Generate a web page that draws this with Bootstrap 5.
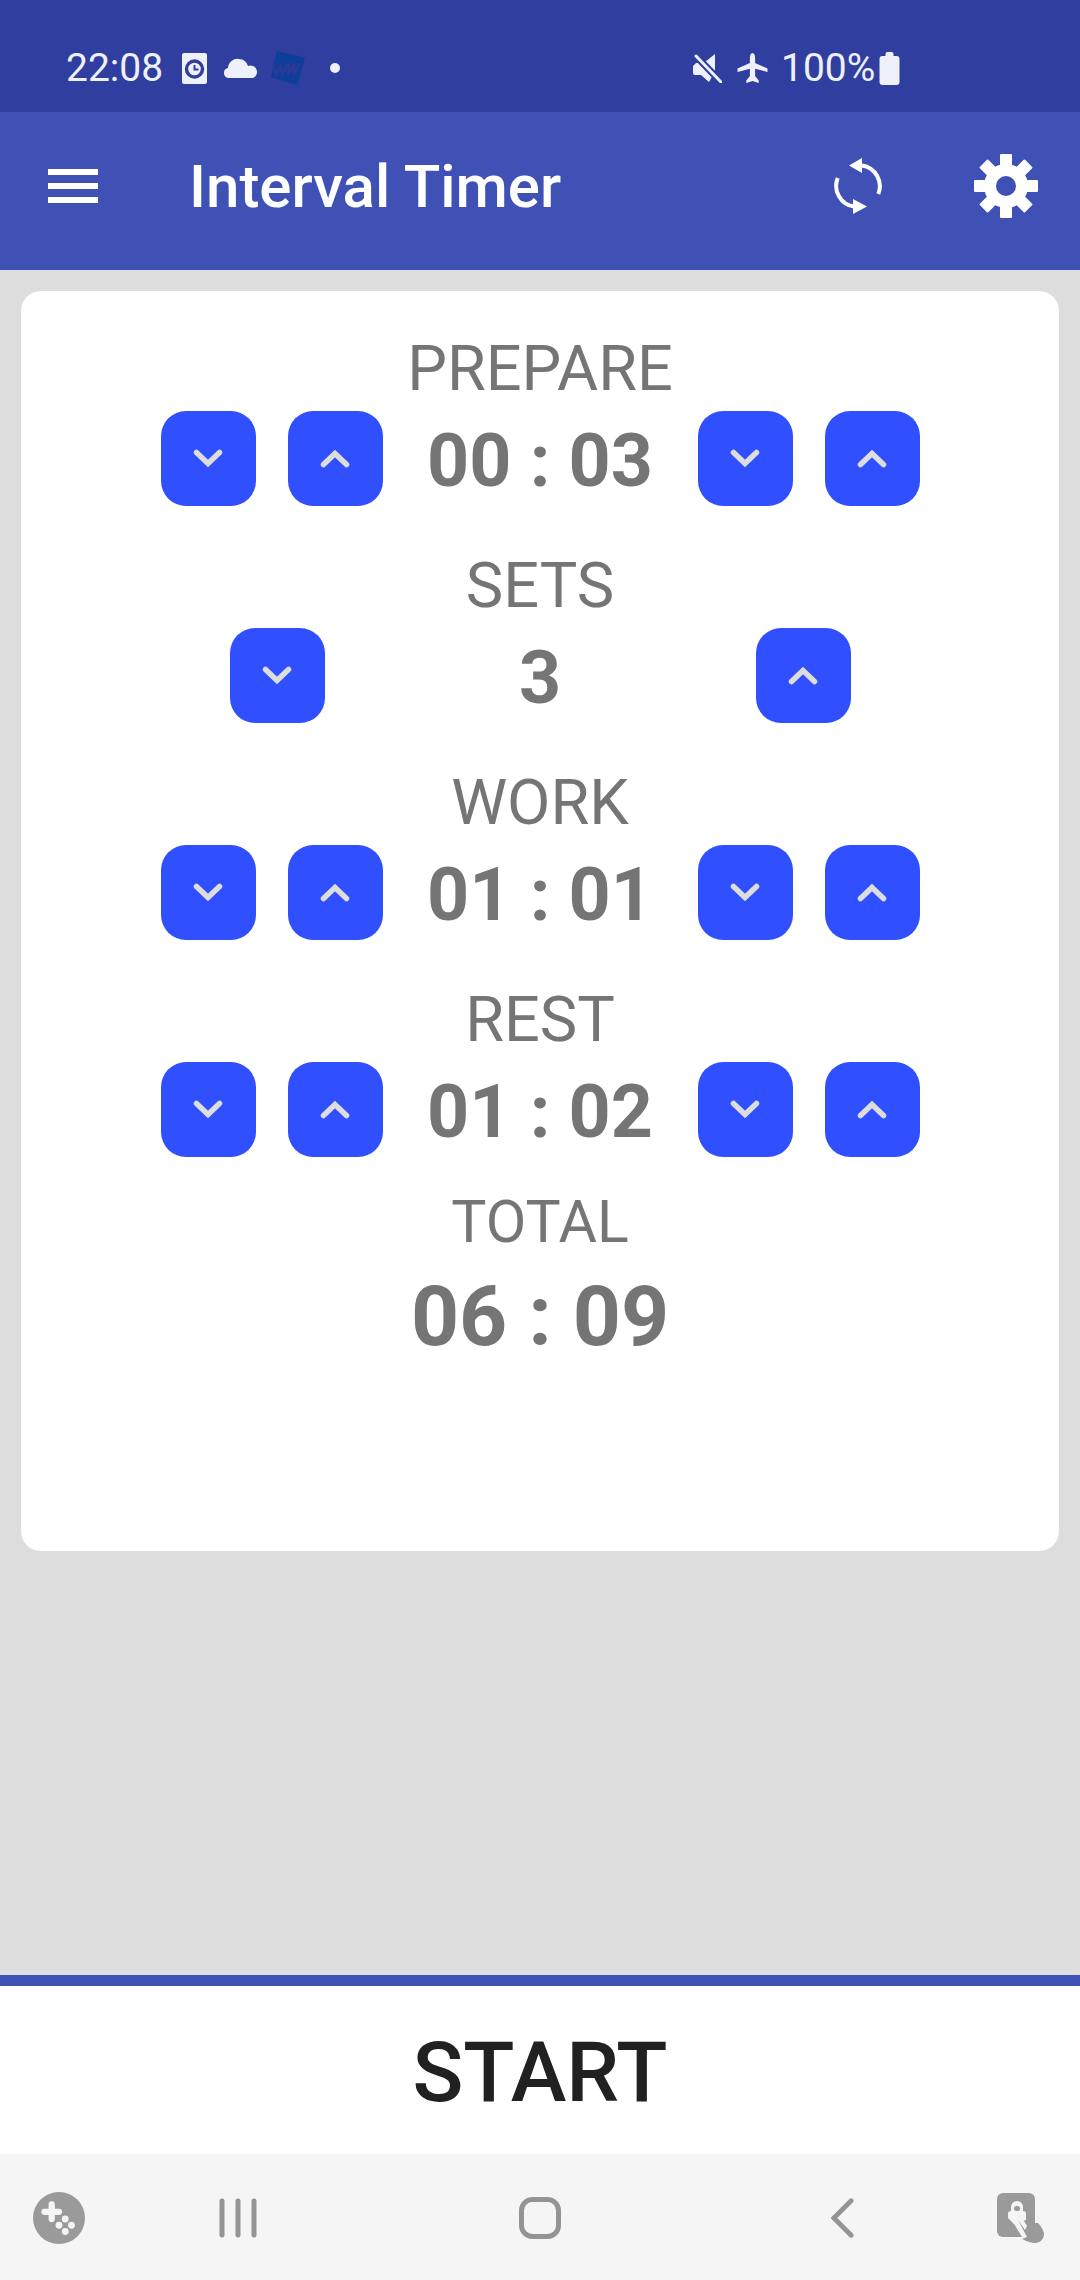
<!DOCTYPE html>
<html lang="en">
<head>
    <meta charset="UTF-8">
    <meta name="viewport" content="width=device-width, initial-scale=1.0">
    <title>Interval Timer</title>
    <link href="https://cdn.jsdelivr.net/npm/bootstrap@5.3.0/dist/css/bootstrap.min.css" rel="stylesheet">
    <style>
        html, body { height: 2280px; }
        body { font-family: Roboto, "Liberation Sans", sans-serif; background: #dddddd; overflow: hidden; }
        svg { display: block; flex: none; }

        .status-bar { height: 112px; background: #303f9f; color: #eef0fa; font-size: 39px; padding: 24px 0 0 66px; line-height: 1; }
        .clock-time { width: 95px; }
        .st-clock { margin-left: 21px; }
        .st-cloud { margin-left: 17px; }
        .st-wn { margin-left: 12px; }
        .st-dot { margin-left: 24px; }
        .status-right { margin-left: 353px; }
        .st-plane { margin-left: 15px; }
        .status-pct { width: 91px; margin: 0 7px 0 13px; }

        .app-bar { height: 158px; background: #3f51b5; color: #fff; padding-bottom: 10px; }
        .menu-btn { margin-left: 48px; width: 50px; }
        .menu-btn span { display: block; height: 6px; background: #fff; margin-bottom: 8px; }
        .menu-btn span:last-child { margin-bottom: 0; }
        .app-title { font-size: 60px; font-weight: 500; margin: 2px 0 0 91px; line-height: 1; width: 645px; }
        .gear-icon { margin-left: 92px; }

        .timer-card { margin: 21px 21px 0; height: 1260px; background: #fff; border-radius: 20px; padding-top: 42px; color: #757575; border: 0; }
        .timer-block { margin-bottom: 44px; }
        .timer-block.last-block { margin-bottom: 29px; }
        .timer-label { font-size: 63px; line-height: 72px; margin-bottom: 6px; text-align: center; }
        .total-label { font-size: 59px; margin-bottom: 0; }
        .timer-value { font-size: 73.5px; font-weight: 700; height: 95px; line-height: 100px; text-align: center; width: 315px; }
        .timer-value.wide { width: 431px; }
        .step-btn { width: 95px; height: 95px; padding: 0; background: #3050ff; border: 0; border-radius: 25px; }
        .step-btn:hover { background: #3050ff; }
        .pair-gap { gap: 32px; }
        .total-value { font-size: 84px; font-weight: 700; line-height: 118px; text-align: center; }

        .start-bar { height: 179px; background: #fff; border-top: 11px solid #3f51b5; padding-top: 6px; }
        .start-text { font-size: 84px; font-weight: 500; color: #212121; line-height: 1; }

        .nav-bar { height: 126px; background: #f5f5f5; padding-top: 2px; }
        .nav-game { margin-left: 33px; }
        .nav-recents { margin-left: 134px; }
        .nav-home { margin-left: 262px; }
        .nav-back { margin-left: 270px; }
        .nav-lock { margin-left: 143px; }
    </style>
</head>
<body>
<div class="d-flex flex-column h-100">

    <!-- barra de estado -->
    <div class="status-bar d-flex align-items-center">
        <span class="clock-time">22:08</span>
        <svg class="st-clock" width="25" height="31" viewBox="0 0 25 31">
            <rect width="25" height="31" rx="2" fill="#eef0fa"/>
            <circle cx="12.500" cy="16" r="8" fill="none" stroke="#303f9f" stroke-width="3.400"/>
            <path d="M12.500 12v4.600h4" fill="none" stroke="#303f9f" stroke-width="2"/>
        </svg>
        <svg class="st-cloud" width="34" height="20" viewBox="0 0 34 20">
            <path d="M5 20a5 5 0 0 1-1-9.900A9.500 9.500 0 0 1 15 1a9 9 0 0 1 9 7 6.200 6.200 0 0 1 5 12z" fill="#eef0fa"/>
        </svg>
        <svg class="st-wn" width="36" height="38" viewBox="0 0 38 38">
            <path d="M7 1l30 7-8 29-28-8z" fill="#0d3e99"/>
            <path d="M3 14l3 13 5-11 2 11 6-13M20 14l-1 13 7-13-1 13 6-13" fill="none" stroke="#2b3a97" stroke-width="2.600"/>
        </svg>
        <svg class="st-dot" width="10" height="10" viewBox="0 0 10 10">
            <circle cx="5" cy="5" r="5" fill="#eef0fa"/>
        </svg>
        <div class="status-right d-flex align-items-center">
            <svg width="29" height="30" viewBox="0 0 29 30">
                <path d="M0 13l3-3h5L20 22l-4 7-8-7H2a2 2 0 0 1-2-2zM12 9l10-8v17z" fill="#eef0fa"/>
                <path d="M2 2l26 27" stroke="#303f9f" stroke-width="7"/>
                <path d="M3 3l25 26" stroke="#eef0fa" stroke-width="3" stroke-linecap="round"/>
            </svg>
            <svg class="st-plane" width="31" height="30" viewBox="0 0 30 30">
                <path d="M15 0c1.800 0 2.600 2.500 2.600 5v5L30 15.500V19l-12.400-3.200V23l3.600 4.500V30L15 28l-6.200 2v-2.500l3.600-4.500v-7.200L0 19v-3.500L12.400 10V5c0-2.500.8-5 2.600-5z" fill="#eef0fa"/>
            </svg>
            <span class="status-pct">100%</span>
            <svg width="21" height="33" viewBox="0 0 20 33">
                <path d="M6 2a2 2 0 0 1 2-2h4a2 2 0 0 1 2 2v2h3a3 3 0 0 1 3 3v23a3 3 0 0 1-3 3H3a3 3 0 0 1-3-3V7a3 3 0 0 1 3-3h3z" fill="#eef0fa"/>
            </svg>
        </div>
    </div>

    <!-- barra de la app -->
    <div class="app-bar d-flex align-items-center">
        <div class="menu-btn"><span></span><span></span><span></span></div>
        <h1 class="app-title">Interval Timer</h1>
        <svg width="48" height="60" viewBox="0 0 48 60">
            <path d="M28 9.400A21 21 0 0 1 44.300 38" fill="none" stroke="#fff" stroke-width="4"/>
            <path d="M15 9.500L28 2v15z" fill="#fff"/>
            <path d="M20 50.600A21 21 0 0 1 3.700 22" fill="none" stroke="#fff" stroke-width="4"/>
            <path d="M33 50.500L19 43v15z" fill="#fff"/>
        </svg>
        <svg class="gear-icon" width="64" height="64" viewBox="-32 -32 64 64">
            <circle r="16" fill="none" stroke="#fff" stroke-width="12"/>
            <g fill="#fff">
                <rect x="-6" y="-32" width="12" height="14" rx="1"/>
                <rect x="-6" y="-32" width="12" height="14" rx="1" transform="rotate(45)"/>
                <rect x="-6" y="-32" width="12" height="14" rx="1" transform="rotate(90)"/>
                <rect x="-6" y="-32" width="12" height="14" rx="1" transform="rotate(135)"/>
                <rect x="-6" y="-32" width="12" height="14" rx="1" transform="rotate(180)"/>
                <rect x="-6" y="-32" width="12" height="14" rx="1" transform="rotate(225)"/>
                <rect x="-6" y="-32" width="12" height="14" rx="1" transform="rotate(270)"/>
                <rect x="-6" y="-32" width="12" height="14" rx="1" transform="rotate(315)"/>
            </g>
        </svg>
    </div>

    <!-- contenido -->
    <div class="flex-grow-1">
        <div class="card timer-card" id="timerCard"></div>
    </div>

    <div class="start-bar d-flex align-items-center justify-content-center">
        <span class="start-text">START</span>
    </div>

    <!-- navegacion -->
    <div class="nav-bar d-flex align-items-center">
        <svg class="nav-game" width="52" height="52" viewBox="0 0 50 50">
            <circle cx="25" cy="25" r="25" fill="#9a9a9a"/>
            <path d="M18 12v14M11 19h14" stroke="#f5f5f5" stroke-width="6" stroke-linecap="round"/>
            <g fill="#f5f5f5">
                <circle cx="31" cy="26" r="3.300"/>
                <circle cx="25" cy="32" r="3.300"/>
                <circle cx="37" cy="32" r="3.300"/>
                <circle cx="31" cy="38" r="3.300"/>
            </g>
        </svg>
        <svg class="nav-recents" width="38" height="40" viewBox="0 0 38 40">
            <path d="M3 3v34M19 3v34M35 3v34" stroke="#949494" stroke-width="5" stroke-linecap="round"/>
        </svg>
        <svg class="nav-home" width="42" height="42" viewBox="0 0 42 42">
            <rect x="2.500" y="2.500" width="37" height="37" rx="11" fill="none" stroke="#949494" stroke-width="5"/>
        </svg>
        <svg class="nav-back" width="23" height="42" viewBox="0 0 24 42">
            <path d="M21 3L3 21l18 18" fill="none" stroke="#949494" stroke-width="5" stroke-linecap="round"/>
        </svg>
        <svg class="nav-lock" width="48" height="50" viewBox="0 0 48 50">
            <rect width="38" height="44" rx="6" fill="#9a9a9a"/>
            <path d="M11 21a3 3 0 0 1 3-3v-4a6 6 0 0 1 12 0v4a3 3 0 0 1 3 3v6l-12 4-6-6z" fill="#f5f5f5"/>
            <rect x="17" y="13" width="6" height="5" rx="2.500" fill="#9a9a9a"/>
            <path d="M20 26l9 15" stroke="#f5f5f5" stroke-width="10" stroke-linecap="round"/>
            <path d="M21 27l7 10 3-6 4 1 3-2 3 0c3 3 6 8 6 11 0 5-4 9-9 9-3 0-7-1-13-4l5-2z" fill="#9a9a9a"/>
        </svg>
    </div>
</div>

<script src="https://cdn.jsdelivr.net/npm/bootstrap@5.3.0/dist/js/bootstrap.bundle.min.js"></script>
<script>
    document.addEventListener("DOMContentLoaded", () => {
        const timerCard = document.getElementById("timerCard");

        const flechaAbajo = `<svg class="mx-auto" width="30" height="19" viewBox="0 0 30 19"><path d="M3.500 3.500L15 14.500 26.500 3.500" fill="none" stroke="#dddddd" stroke-width="5.500" stroke-linecap="round"/></svg>`;
        const flechaArriba = `<svg class="mx-auto" width="30" height="19" viewBox="0 0 30 19"><path d="M3.500 15.500L15 4.500l11.500 11" fill="none" stroke="#dddddd" stroke-width="5.500" stroke-linecap="round"/></svg>`;
        const boton = icono => `<button type="button" class="btn step-btn d-flex align-items-center">${icono}</button>`;

        const bloques = [
            { nombre: "PREPARE", valor: "00 : 03" },
            { nombre: "SETS", valor: "3", simple: true },
            { nombre: "WORK", valor: "01 : 01" },
            { nombre: "REST", valor: "01 : 02" }
        ];

        let html = "";
        bloques.forEach((b, i) => {
            const par = `${boton(flechaAbajo)}${boton(flechaArriba)}`;
            const fila = b.simple
                ? `${boton(flechaAbajo)}<div class="timer-value wide">${b.valor}</div>${boton(flechaArriba)}`
                : `<div class="d-flex pair-gap">${par}</div><div class="timer-value">${b.valor}</div><div class="d-flex pair-gap">${par}</div>`;
            const clase = i === bloques.length - 1 ? "timer-block last-block" : "timer-block";
            html += `<div class="${clase}"><div class="timer-label">${b.nombre}</div><div class="d-flex justify-content-center">${fila}</div></div>`;
        });
        html += `<div class="timer-label total-label">TOTAL</div><div class="total-value">06 : 09</div>`;
        timerCard.innerHTML = html;
    });
</script>
</body>
</html>
